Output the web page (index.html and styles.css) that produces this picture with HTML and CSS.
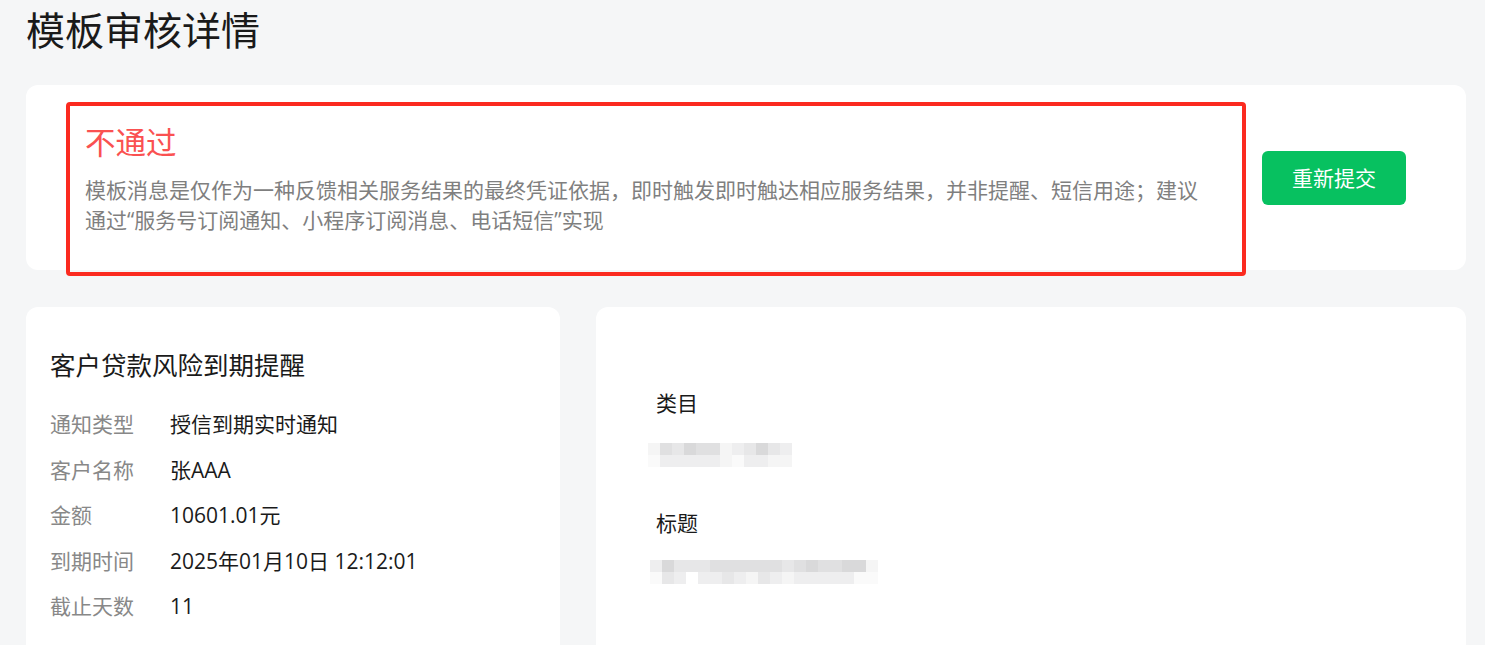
FILE: index.html
```html
<!DOCTYPE html>
<html lang="zh-CN">
<head>
<meta charset="utf-8">
<title>模板审核详情</title>
<link rel="stylesheet" href="styles.css">
</head>
<body>
<div class="page">
  <h1 class="page-title">模板审核详情</h1>

  <section class="card status-card">
    <div class="status-text">
      <div class="status-title">不通过</div>
      <p class="status-desc">模板消息是仅作为一种反馈相关服务结果的最终凭证依据，即时触发即时触达相应服务结果，并非提醒、短信用途；建议通过“服务号订阅通知、小程序订阅消息、电话短信”实现</p>
    </div>
    <button class="btn-primary">重新提交</button>
    <div class="highlight"></div>
  </section>

  <div class="detail-grid">
    <section class="card preview-card">
      <h2 class="preview-title">客户贷款风险到期提醒</h2>
      <dl class="kv-list">
        <div class="kv-row"><dt>通知类型</dt><dd>授信到期实时通知</dd></div>
        <div class="kv-row"><dt>客户名称</dt><dd>张AAA</dd></div>
        <div class="kv-row"><dt>金额</dt><dd>10601.01元</dd></div>
        <div class="kv-row"><dt>到期时间</dt><dd>2025年01月10日 12:12:01</dd></div>
        <div class="kv-row"><dt>截止天数</dt><dd>11</dd></div>
      </dl>
    </section>

    <section class="card info-card">
      <div class="field">
        <div class="field-label">类目</div>
        <div class="mosaic mosaic-short">
          <div class="mosaic-row">
            <span class="s5"></span><span class="s2"></span><span class="s3"></span><span class="s1"></span><span class="s2"></span><span class="s2"></span><span class="s5"></span><span class="s4"></span><span class="s3"></span><span class="s1"></span><span class="s3"></span><span class="s4"></span>
          </div>
          <div class="mosaic-row">
            <span class="s6"></span><span class="s4"></span><span class="s4"></span><span class="s4"></span><span class="s4"></span><span class="s4"></span><span class="s5"></span><span class="s6"></span><span class="s4"></span><span class="s4"></span><span class="s5"></span><span class="s5"></span>
          </div>
        </div>
      </div>
      <div class="field">
        <div class="field-label">标题</div>
        <div class="mosaic mosaic-long">
          <div class="mosaic-row">
            <span class="s4"></span><span class="s1"></span><span class="s3"></span><span class="s3"></span><span class="s3"></span><span class="s2"></span><span class="s2"></span><span class="s2"></span><span class="s2"></span><span class="s2"></span><span class="s2"></span><span class="s3"></span><span class="s2"></span><span class="s1"></span><span class="s2"></span><span class="s2"></span><span class="s1"></span><span class="s1"></span><span class="s5"></span>
          </div>
          <div class="mosaic-row">
            <span class="s6"></span><span class="s3"></span><span class="s4"></span><span class="s7"></span><span class="s4"></span><span class="s4"></span><span class="s3"></span><span class="s4"></span><span class="s5"></span><span class="s3"></span><span class="s4"></span><span class="s5"></span><span class="s4"></span><span class="s4"></span><span class="s4"></span><span class="s4"></span><span class="s4"></span><span class="s6"></span><span class="s6"></span>
          </div>
        </div>
      </div>
    </section>
  </div>
</div>
</body>
</html>
```

FILE: styles.css
```css
* { box-sizing: border-box; }

html, body {
  margin: 0;
  padding: 0;
  background: #f5f6f7;
  font-family: "Open Sans", "Noto Sans CJK SC", sans-serif;
  color: #1a1a1a;
  overflow: hidden;
}

.page {
  padding: 0 19px 0 26px;
}

.page-title {
  margin: 0;
  padding-top: 8px;
  font-size: 39px;
  line-height: 44px;
  font-weight: 400;
  color: #1a1a1a;
}

.card {
  background: #ffffff;
  border-radius: 12px;
}

.status-card {
  position: relative;
  margin-top: 33px;
  height: 185px;
  padding: 0 60px 0 59px;
  display: flex;
  align-items: center;
  gap: 50px;
}

.status-text {
  flex: 1;
  padding-top: 2px;
}

.status-title {
  font-size: 30.5px;
  line-height: 40px;
  color: #fa5151;
}

.status-desc {
  margin: 13px 0 0;
  font-size: 21px;
  line-height: 30px;
  color: #7f7f7f;
}

.btn-primary {
  flex: none;
  width: 144px;
  height: 54px;
  border: none;
  border-radius: 6px;
  background: #07c160;
  color: #ffffff;
  font-family: inherit;
  font-size: 21px;
  line-height: 30px;
  padding: 0;
  cursor: pointer;
}

.highlight {
  position: absolute;
  left: 40px;
  top: 17px;
  width: 1180px;
  height: 174px;
  border: 4px solid #fb2a1f;
  border-radius: 4px;
  pointer-events: none;
}

.detail-grid {
  margin-top: 37px;
  display: grid;
  grid-template-columns: 534px 1fr;
  gap: 36px;
}

.preview-card {
  padding: 40px 24px 60px;
  min-height: 400px;
}

.preview-title {
  margin: 0;
  font-size: 25.5px;
  line-height: 36px;
  font-weight: 400;
  color: #1a1a1a;
}

.kv-list {
  margin: 26px 0 0;
  display: flex;
  flex-direction: column;
  gap: 15.5px;
}

.kv-row {
  display: flex;
  font-size: 21px;
  line-height: 30px;
}

.kv-row dt {
  width: 120px;
  flex: none;
  color: #888888;
}

.kv-row dd {
  margin: 0;
  color: #1a1a1a;
}

.info-card {
  padding: 81px 60px 60px 60px;
  min-height: 400px;
  display: flex;
  flex-direction: column;
  gap: 41px;
}

.field-label {
  font-size: 21px;
  line-height: 30px;
  color: #1a1a1a;
}

.mosaic {
  margin-top: 25px;
  margin-left: -8px;
  display: flex;
  flex-direction: column;
}

.mosaic-long {
  margin-top: 22px;
  margin-left: -6px;
}

.mosaic-row {
  display: flex;
}

.mosaic-row span {
  width: 12px;
  height: 12px;
  flex: none;
}

.s1 { background: #d9d9da; }
.s2 { background: #e0e0e1; }
.s3 { background: #e7e7e8; }
.s4 { background: #eeeeef; }
.s5 { background: #f5f5f5; }
.s6 { background: #fafafa; }
.s7 { background: #ffffff; }
```
